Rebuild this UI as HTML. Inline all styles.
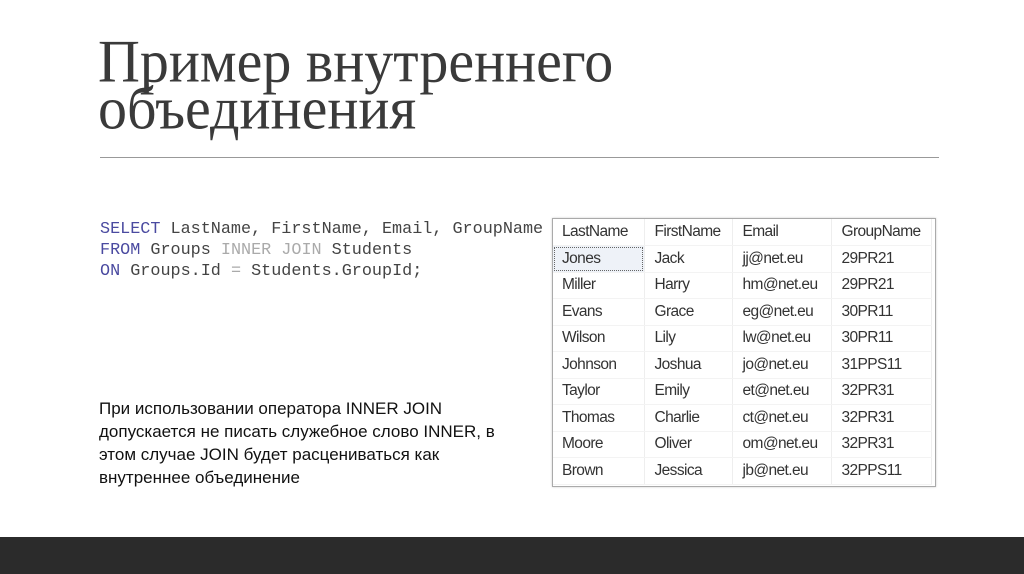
<!DOCTYPE html>
<html><head><meta charset="utf-8"><style>
body{margin:0;width:1024px;height:574px;background:#fff;position:relative;overflow:hidden;font-family:"Liberation Sans",sans-serif}
.t{position:absolute;left:98px;top:38px;font-family:"Liberation Serif","Noto Serif CJK SC",serif;font-size:58px;line-height:45px;color:#3a3a3a;margin:0;font-weight:normal;transform:scaleY(1.04);transform-origin:0 0;white-space:nowrap}
.rule{position:absolute;left:100px;top:157px;width:839px;height:1px;background:#999}
.code{position:absolute;left:100px;top:219px;font-family:"Liberation Mono",monospace;font-size:16.8px;line-height:21px;color:#444;white-space:pre}
.k{color:#4a4aa0}.g{color:#aaa}
.p{position:absolute;left:99px;top:397px;font-size:17px;line-height:23px;color:#111;width:420px}
.tbl{position:absolute;left:552px;top:218px;width:382px;height:267px;border:1px solid #aaa;box-shadow:0 0 2px #ccc;background:#fff}
table{border-collapse:collapse;font-size:15.5px;color:#333;letter-spacing:-0.6px}
td{height:26.5px;padding:0 0 0 10px;border-right:1px solid #eee;border-bottom:1px solid #f3f3f3;box-sizing:border-box}
tr td:first-child{padding-left:9px}
.sel{outline:1px dotted #666;outline-offset:-2px;background:#eef2f8}
.bar{position:absolute;left:0;top:537px;width:1024px;height:37px;background:#2b2b2b}
</style></head><body>
<h1 class="t">Пример внутреннего<br>объединения</h1>
<div class="rule"></div>
<div class="code"><span class="k">SELECT</span> LastName, FirstName, Email, GroupName
<span class="k">FROM</span> Groups <span class="g">INNER JOIN</span> Students
<span class="k">ON</span> Groups.Id <span class="g">=</span> Students.GroupId;</div>
<div class="p">При использовании оператора INNER JOIN допускается не писать служебное слово INNER, в этом случае JOIN будет расцениваться как внутреннее объединение</div>
<div class="tbl"><table>
<colgroup><col style="width:91px"><col style="width:88px"><col style="width:99px"><col style="width:100px"></colgroup>
<tr><td>LastName</td><td>FirstName</td><td>Email</td><td>GroupName</td></tr>
<tr><td class="sel">Jones</td><td>Jack</td><td>jj@net.eu</td><td>29PR21</td></tr>
<tr><td>Miller</td><td>Harry</td><td>hm@net.eu</td><td>29PR21</td></tr>
<tr><td>Evans</td><td>Grace</td><td>eg@net.eu</td><td>30PR11</td></tr>
<tr><td>Wilson</td><td>Lily</td><td>lw@net.eu</td><td>30PR11</td></tr>
<tr><td>Johnson</td><td>Joshua</td><td>jo@net.eu</td><td>31PPS11</td></tr>
<tr><td>Taylor</td><td>Emily</td><td>et@net.eu</td><td>32PR31</td></tr>
<tr><td>Thomas</td><td>Charlie</td><td>ct@net.eu</td><td>32PR31</td></tr>
<tr><td>Moore</td><td>Oliver</td><td>om@net.eu</td><td>32PR31</td></tr>
<tr><td>Brown</td><td>Jessica</td><td>jb@net.eu</td><td>32PPS11</td></tr>
</table></div>
<div class="bar"></div>
</body></html>
